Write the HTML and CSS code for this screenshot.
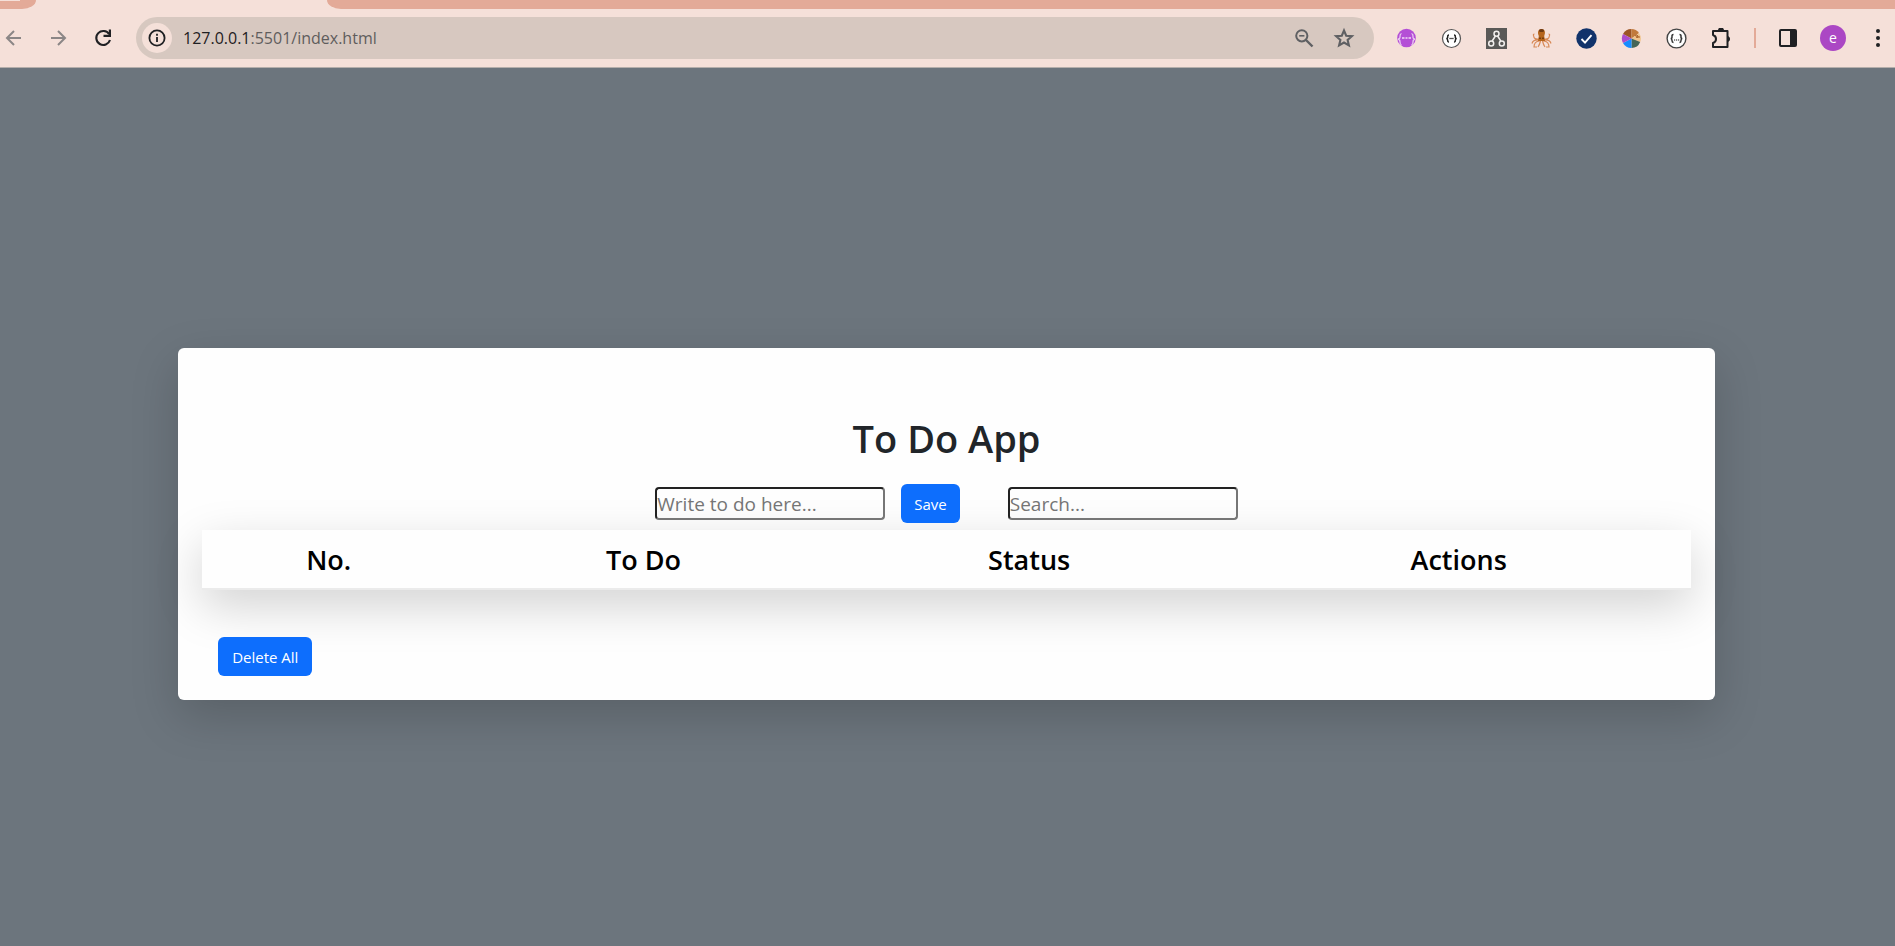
FILE: index.html
```html
<!DOCTYPE html>
<html lang="en">
<head>
<meta charset="utf-8">
<title>To Do App</title>
<link rel="stylesheet" href="styles.css">
</head>
<body>
<header class="browser">
  <div class="tabs">
    <div class="tabs-left"><span class="tab-chip"></span></div>
    <div class="tab-active"></div>
    <div class="tabs-rest"></div>
  </div>
  <div class="toolbar">
    <nav class="nav">
      <button class="icon muted" aria-label="Back"><svg width="26" height="26" viewBox="0 0 26 26"><path d="M21 13H7M14 6l-7 7 7 7" fill="none" stroke="currentColor" stroke-width="2"/></svg></button>
      <button class="icon muted" aria-label="Forward"><svg width="26" height="26" viewBox="0 0 26 26"><path d="M6 13h14M13 6l7 7-7 7" fill="none" stroke="currentColor" stroke-width="2"/></svg></button>
      <button class="icon" aria-label="Reload"><svg width="26" height="26" viewBox="0 0 26 26"><path d="M19.2 9.2A7 7 0 1 0 20 15" fill="none" stroke="currentColor" stroke-width="2.1"/><path d="M21 4.500V12h-7.500v-2.200h5.300V4.500z" fill="currentColor"/></svg></button>
    </nav>
    <div class="omnibox">
      <button class="info" aria-label="Site information"><svg width="18" height="18" viewBox="0 0 18 18"><circle cx="9" cy="9" r="7.600" fill="none" stroke="#1f2023" stroke-width="1.800"/><path d="M9 8v5M9 4.800v2" stroke="#1f2023" stroke-width="1.800"/></svg></button>
      <span class="url">127.0.0.1<span class="url-path">:5501/index.html</span></span>
      <div class="omni-actions">
        <button class="icon grey" aria-label="Zoom"><svg width="22" height="22" viewBox="0 0 22 22"><circle cx="8.800" cy="8.800" r="5.600" fill="none" stroke="currentColor" stroke-width="2"/><path d="M6.200 8.800h5.200" stroke="currentColor" stroke-width="1.600"/><path d="M13 13l6.500 6.500" stroke="currentColor" stroke-width="2.400"/></svg></button>
        <button class="icon grey" aria-label="Bookmark"><svg width="22" height="22" viewBox="0 0 22 22"><path d="M11 3.500l2.200 5.200 5.700.5-4.300 3.700 1.300 5.500-4.900-2.900-4.900 2.900 1.300-5.500-4.300-3.700 5.700-.5z" fill="none" stroke="currentColor" stroke-width="2.100"/></svg></button>
      </div>
    </div>
    <div class="extensions">
      <button class="icon" aria-label="JSON viewer"><svg width="21" height="21" viewBox="0 0 21 21"><circle cx="10.500" cy="10" r="9.300" fill="#b44fd6"/><path d="M5.500 5.500Q3.800 6 4 8.500T2 11q2 .4 2 3t1.500 3M15.500 5.500Q17.200 6 17 8.500t2 2.500q-2 .4-2 3t-1.500 3" fill="none" stroke="#eacbf2" stroke-width="1.300"/><path d="M6 10h2.500M9.500 10h2M12.500 10H15" stroke="#f1dcf6" stroke-width="1.300"/></svg></button>
      <button class="icon" aria-label="JSON formatter"><svg width="21" height="21" viewBox="0 0 21 21"><circle cx="10.500" cy="10.500" r="9" fill="#fff" stroke="#555" stroke-width="1.200"/><path d="M8 7Q6.500 7 6.700 8.700T5.300 10.500q1.400.2 1.400 1.900T8 14M13 7q1.500 0 1.300 1.700t1.400 1.800q-1.400.2-1.400 1.900T13 14" fill="none" stroke="#222" stroke-width="1.500"/><path d="M8.300 10.500h4.400" stroke="#555" stroke-width="1.300"/></svg></button>
      <button class="icon" aria-label="Graph"><svg width="21" height="21" viewBox="0 0 21 21"><path d="M0 0h21v21H0z" fill="#5a5957"/><g fill="none" stroke="#f3f0ee" stroke-width="1.500"><circle cx="10.500" cy="5.700" r="2.500"/><circle cx="5.200" cy="15.500" r="2.500"/><circle cx="15.800" cy="15.500" r="2.500"/><path d="M9.400 8L6.200 13M11.600 8l3.200 5"/></g></svg></button>
      <button class="icon" aria-label="Octopus"><svg width="21" height="21" viewBox="0 0 21 21"><g fill="none" stroke="#d88a58" stroke-width="1.200"><path d="M8 11Q3 12 2.500 7.500Q2 6 3.500 6M13 11q5 1 5.500-3.500Q19 6 17.500 6M8 12Q2 11.500 1 15.500M13 12q6-.5 7 3.500M8.500 13Q3 13.500 3 19h3M12.500 13q5.500.5 5.500 6h-3M9.500 13q-1 4-2.500 6M11.500 13q1 4 2.500 6"/></g><path d="M10.500 1C6.500 1 6.500 5 7.800 8L7 13h7l-.8-5c1.300-3 1.300-7-2.700-7z" fill="#b5651d"/><path d="M8 2q2.500-2 5 0l-.5 2h-4z" fill="#6f3a12"/><path d="M9 9.500v1.500M12 9.500v1.500" stroke="#4c2508" stroke-width="1.200"/></svg></button>
      <button class="icon" aria-label="Checker"><svg width="21" height="21" viewBox="0 0 21 21"><circle cx="10.500" cy="10.500" r="10.200" fill="#11336b"/><path d="M5.500 11l3.500 3.700 6.500-7.500" fill="none" stroke="#fff" stroke-width="1.900"/></svg></button>
      <button class="icon" aria-label="Color picker"><svg width="21" height="21" viewBox="0 0 21 21"><path d="M10.500 10.500L2 6A9.500 9.500 0 0 1 10.500 1z" fill="#9b5524"/><path d="M10.500 10.500V1A9.500 9.500 0 0 1 18 5z" fill="#c17a3c"/><path d="M10.500 10.500L18 5a9.500 9.500 0 0 1 1.200 9z" fill="#efc38c"/><path d="M14 8q2-2 3 0t-2 1h4" fill="none" stroke="#a65f26"/><path d="M10.500 10.500l8.700 3.500a9.500 9.500 0 0 1-8.700 6z" fill="#456657"/><path d="M10.500 10.500V20A9.500 9.500 0 0 1 2 15z" fill="#168cff"/><path d="M10.500 10.500L2 15a9.500 9.500 0 0 1 0-9z" fill="#ab4cca"/></svg></button>
      <button class="icon" aria-label="API viewer"><svg width="21" height="21" viewBox="0 0 21 21"><circle cx="10.500" cy="10.500" r="9.400" fill="#fff" stroke="#444" stroke-width="1.400"/><path d="M7.500 6.500Q5.800 6.500 6 8.500t-1.300 2Q6 10.700 6 12.500t1.500 2M13.500 6.500q1.700 0 1.500 2t1.300 2q-1.300.2-1.300 2t-1.500 2" fill="none" stroke="#333" stroke-width="1.500"/><path d="M8 12h1.200M10 12h1.200M12 12h1.200" stroke="#666" stroke-width="1.300"/></svg></button>
      <button class="icon" aria-label="Extensions"><svg width="21" height="21" viewBox="0 0 21 21"><path d="M2 3h14.500v16H2v-4q3-1 3-4T2 7z" fill="none" stroke="currentColor" stroke-width="2" stroke-linejoin="round"/><path d="M7 2.500a3 3 0 0 1 6 0zM17 8a3.200 3.200 0 0 1 0 6z" fill="currentColor"/></svg></button>
    </div>
    <span class="divider"></span>
    <div class="tools">
      <button class="icon" aria-label="Side panel"><svg width="26" height="26" viewBox="0 0 26 26"><rect x="5" y="5" width="16" height="16" rx="1" fill="none" stroke="currentColor" stroke-width="2"/><path d="M15 5h6v16h-6z" fill="currentColor"/></svg></button>
      <button class="avatar" aria-label="Profile">e</button>
      <button class="icon" aria-label="Menu"><svg width="26" height="26" viewBox="0 0 26 26"><g fill="currentColor"><circle cx="13" cy="6" r="2"/><circle cx="13" cy="13" r="2"/><circle cx="13" cy="20" r="2"/></g></svg></button>
    </div>
  </div>
</header>
<main class="page">
  <section class="card">
    <h1 class="title">To Do App</h1>
    <form class="controls">
      <input class="field" type="text" placeholder="Write to do here..." aria-label="Write to do here">
      <button class="btn" type="button">Save</button>
      <input class="field search" type="text" placeholder="Search..." aria-label="Search">
    </form>
    <table class="todos">
      <thead>
        <tr><th class="col-no">No.</th><th class="col-todo">To Do</th><th class="col-status">Status</th><th class="col-actions">Actions</th></tr>
      </thead>
    </table>
    <button class="btn delete-all" type="button">Delete All</button>
  </section>
</main>
</body>
</html>
```
FILE: styles.css
```css
* { box-sizing: border-box; }

body {
  margin: 0;
  min-height: 100vh;
  display: flex;
  flex-direction: column;
  background: #6c757d;
  font-family: "Open Sans", "Noto Sans", sans-serif;
  color: #212529;
}

button { font-family: inherit; border: 0; padding: 0; background: none; }

.browser { background: #f5e0d9; border-bottom: 1px solid #b5aeab; }

.tabs { display: flex; height: 9px; background: #f5e0d9; }
.tabs-left { width: 36px; background: #e3aa98; border-bottom-right-radius: 14px 9px; }
.tab-chip { display: block; width: 20px; height: 1px; background: #f5e0d9; }
.tab-active { width: 291px; }
.tabs-rest { flex: 1; background: #e3aa98; border-bottom-left-radius: 14px 9px; }

.toolbar { display: flex; align-items: center; padding: 8px 4px 8px 0; }
.nav { display: flex; gap: 19px; margin-right: 20px; }
.icon { display: flex; color: #1f2023; }
.icon.muted { color: #8b8686; }
.icon.grey { color: #5f6063; }

.omnibox {
  flex: 1;
  display: flex;
  align-items: center;
  height: 42px;
  padding: 0 19px 0 6px;
  border-radius: 21px;
  background: #d7c8c0;
}
.info {
  display: flex;
  align-items: center;
  justify-content: center;
  width: 30px;
  height: 30px;
  border-radius: 50%;
  background: #f5e0d9;
}
.url { flex: 1; margin-left: 11px; font-size: 16px; line-height: 24px; color: #1f2023; }
.url-path { color: #5f5d5d; }
.omni-actions { display: flex; gap: 18px; }

.extensions { display: flex; gap: 24px; margin-left: 22px; }
.divider { width: 2px; height: 20px; margin: 0 19px 0 22px; background: #e3aa98; }
.tools { display: flex; align-items: center; gap: 19px; }
.avatar {
  width: 26px;
  height: 26px;
  border-radius: 50%;
  background: #ab47c4;
  color: #fff;
  font-size: 14px;
  line-height: 24px;
}

.page { flex: 1; padding-top: 280px; }
.card {
  width: 81.1%;
  margin-left: 9.4%;
  padding: 66px 24px 24px;
  border-radius: 6px;
  background: #fefefe;
  box-shadow: 0 16px 48px rgba(0, 0, 0, 0.175);
}
.title { margin: 0 0 22px; font-size: 38px; line-height: 48px; font-weight: 600; text-align: center; }

.controls { display: flex; align-items: center; justify-content: center; gap: 16px; margin-bottom: 7px; }
.field {
  width: 230px;
  height: 33px;
  padding: 1px 0;
  border: 2px solid #767676;
  border-top-color: #222;
  border-left-color: #222;
  border-radius: 4px;
  background: transparent;
  font-family: inherit;
  font-size: 19px;
}
.field::placeholder { color: #757575; }
.search { margin-left: 32px; }

.btn {
  height: 39px;
  padding: 0 13px;
  border-radius: 6px;
  background: #0d6efd;
  color: #fff;
  font-size: 15px;
  line-height: 24px;
}

.todos {
  width: 100%;
  table-layout: fixed;
  border-collapse: separate;
  border-spacing: 0;
  background: #fefefe;
  box-shadow: 0 16px 48px rgba(0, 0, 0, 0.175);
}
.todos th {
  padding: 10px 8px 8px;
  border-bottom: 2px solid #ebebeb;
  color: #000;
  font-size: 27px;
  line-height: 40px;
  font-weight: 600;
  text-align: center;
}
.col-no { width: 17%; }
.col-todo { width: 25.3%; }
.col-status { width: 26.5%; }

.delete-all { display: block; position: relative; margin: 47px 0 0 16px; padding: 0 14px; }
```
